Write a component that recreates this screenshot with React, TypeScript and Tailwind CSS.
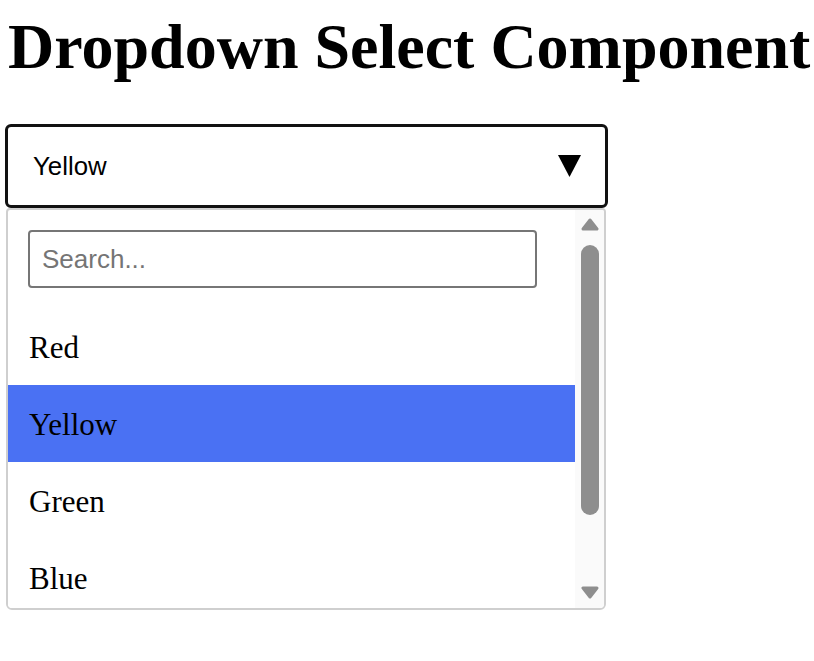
import React from "react";

const items = ["Red", "Yellow", "Green", "Blue"];

export default function App() {
  return (
    <div className="pt-2 bg-white min-h-[661px]">
      <h1
        className="ml-2 mt-[2px] mb-[40px] text-[64px] leading-[74px] font-bold text-black whitespace-nowrap"
        style={{ fontFamily: '"Liberation Serif", "Times New Roman", serif' }}
      >
        Dropdown Select Component
      </h1>
      <div className="ml-[5px] w-[603px]">
        <div
          className="h-[84px] border-[3px] border-[#111] rounded-[6px] bg-white flex items-center justify-between pl-[25px] pr-[24px]"
          style={{ fontFamily: '"Liberation Sans", Arial, sans-serif' }}
        >
          <span className="text-[25.8px] text-black">Yellow</span>
          <svg width="23" height="22" viewBox="0 0 23 22">
            <polygon points="0,0 23,0 11.5,22" fill="#000" />
          </svg>
        </div>
        <div className="ml-px w-[600px] h-[402px] border-2 border-[#cfcfcf] rounded-b-[6px] rounded-t-[4px] flex overflow-hidden bg-white">
          <div className="flex-1 overflow-hidden">
            <div className="p-5">
              <div
                className="w-[509px] h-[58px] border-2 border-[#767676] rounded-[4px] flex items-center pl-3"
                style={{ fontFamily: '"Liberation Sans", Arial, sans-serif' }}
              >
                <span className="text-[26px] text-[#757575]">Search...</span>
              </div>
            </div>
            {items.map((it) => (
              <div
                key={it}
                className={`h-[77px] flex items-center pl-[21px] pt-[3px] text-[31px] text-black ${
                  it === "Yellow" ? "bg-[#4a71f3]" : "bg-white"
                }`}
                style={{ fontFamily: '"Liberation Serif", "Times New Roman", serif' }}
              >
                {it}
              </div>
            ))}
          </div>
          <div className="w-[29px] bg-[#fafafa] flex flex-col items-center pt-[8px] pb-[9px]">
            <svg width="18" height="13" viewBox="0 0 18 13">
              <polygon points="9,2 16,11 2,11" fill="#8e8e8e" stroke="#8e8e8e" strokeWidth="3" strokeLinejoin="round" />
            </svg>
            <div className="mt-[14px] w-[18px] h-[270px] rounded-full bg-[#8e8e8e]" />
            <div className="flex-1" />
            <svg width="18" height="13" viewBox="0 0 18 13">
              <polygon points="2,2 16,2 9,11" fill="#8e8e8e" stroke="#8e8e8e" strokeWidth="3" strokeLinejoin="round" />
            </svg>
          </div>
        </div>
      </div>
    </div>
  );
}
